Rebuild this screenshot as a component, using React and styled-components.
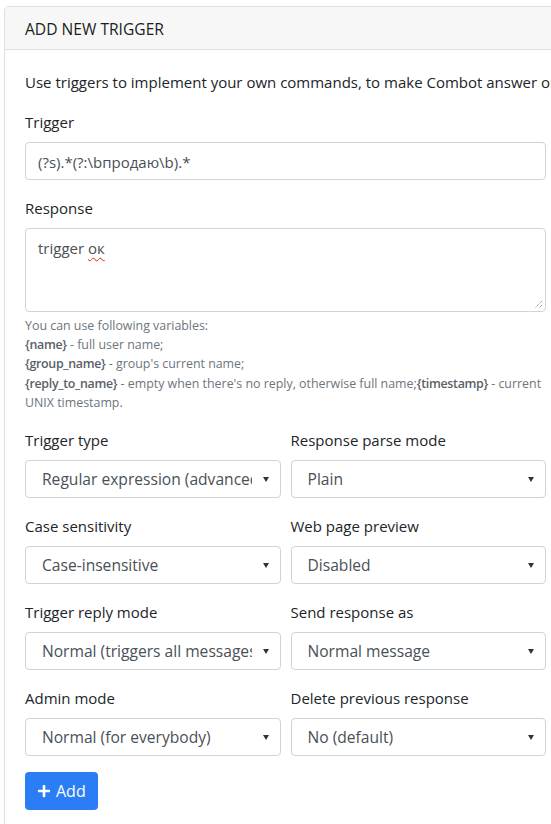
import React from 'react'
import styled, { createGlobalStyle } from 'styled-components'
import { FaPlus } from 'react-icons/fa'

const GlobalStyle = createGlobalStyle`
  html, body {
    margin: 0;
    padding: 0;
    background: #fff;
    overflow: hidden;
  }
  body {
    font-family: "Open Sans", "Noto Sans", sans-serif;
    font-size: 15px;
    line-height: 1.5;
    color: #212529;
  }
`

const Page = styled.div`
  padding: 6px 0 0 4px;
`

const Card = styled.div`
  width: 561px;
  border: 1px solid #dfdfdf;
  border-radius: 4px 0 0 0;
  background: #fff;
`

const CardHeader = styled.div`
  height: 43px;
  box-sizing: border-box;
  padding: 3px 20px 0;
  display: flex;
  align-items: center;
  background: #f7f7f7;
  border-bottom: 1px solid #dfdfdf;
  font-size: 15.6px;
  font-weight: 500;
  color: #1b1e21;
`

const CardBody = styled.div`
  padding: 20px;
`

const Intro = styled.p`
  margin: 0 0 16px;
  line-height: 24px;
  white-space: nowrap;
`

const FormGroup = styled.div`
  margin-bottom: 16px;
  min-width: 0;
`

const Label = styled.div`
  line-height: 24px;
  margin-bottom: 8px;
`

const Field = styled.div`
  position: relative;
  box-sizing: border-box;
  height: ${p => p.$tall ? '84px' : '38px'};
  border: 1px solid #ced4da;
  border-radius: 4px;
  padding: ${p => p.$tall ? '7px 12px' : '1px 12px 0'};
  display: flex;
  align-items: ${p => p.$tall ? 'flex-start' : 'center'};
  color: #495057;
  line-height: 24px;
`

const Misspelled = styled.span`
  text-decoration: underline wavy #e0201b;
  text-decoration-thickness: 1px;
  text-underline-offset: 3px;
`

const Grip = styled.svg`
  position: absolute;
  right: 2px;
  bottom: 2px;
`

const Help = styled.div`
  margin-top: 4px;
  margin-bottom: 16px;
  font-size: 12.4px;
  line-height: 19.2px;
  color: #6c757d;
  b {
    font-weight: 600;
    letter-spacing: -0.3px;
    color: #5a6168;
  }
`

const Row = styled.div`
  display: grid;
  grid-template-columns: minmax(0, 1fr) minmax(0, 1fr);
  column-gap: 10px;
`

const Select = styled.div`
  box-sizing: border-box;
  height: 38px;
  border: 1px solid #ced4da;
  border-radius: 4px;
  padding: 2px 9px 0 16px;
  display: flex;
  align-items: center;
  color: #495057;
  font-size: 15.6px;
`

const SelectText = styled.span`
  flex: 1;
  overflow: hidden;
  white-space: nowrap;
  margin-right: 11px;
`

const Caret = styled.span`
  width: 0;
  height: 0;
  border-left: 3px solid transparent;
  border-right: 3px solid transparent;
  border-top: 5px solid #333;
  margin: 0 2px 2px 0;
`

const Button = styled.button`
  display: inline-flex;
  align-items: center;
  gap: 5px;
  height: 38px;
  padding: 0 12px;
  border: none;
  border-radius: 4px;
  background: #2b7df5;
  color: #fff;
  font-family: inherit;
  font-size: 16px;
`

const selects = [
  ['Trigger type', 'Regular expression (advanced)', 'Response parse mode', 'Plain'],
  ['Case sensitivity', 'Case-insensitive', 'Web page preview', 'Disabled'],
  ['Trigger reply mode', 'Normal (triggers all messages)', 'Send response as', 'Normal message'],
  ['Admin mode', 'Normal (for everybody)', 'Delete previous response', 'No (default)'],
]

const SelectGroup = ({ label, value }) => (
  <FormGroup>
    <Label>{label}</Label>
    <Select>
      <SelectText>{value}</SelectText>
      <Caret />
    </Select>
  </FormGroup>
)

export default function App() {
  return (
    <Page>
      <GlobalStyle />
      <Card>
        <CardHeader>ADD NEW TRIGGER</CardHeader>
        <CardBody>
          <Intro>Use triggers to implement your own commands, to make Combot answer on certain messages.</Intro>
          <FormGroup>
            <Label>Trigger</Label>
            <Field>(?s).*(?:\bпродаю\b).*</Field>
          </FormGroup>
          <Label>Response</Label>
          <Field $tall>
            <span>trigger <Misspelled>ок</Misspelled></span>
            <Grip width="10" height="10" viewBox="0 0 10 10">
              <path d="M9 2 L2 9 M9 6 L6 9" stroke="#777" strokeWidth="1" strokeDasharray="1 1" />
            </Grip>
          </Field>
          <Help>
            You can use following variables:<br />
            <b>{'{name}'}</b> - full user name;<br />
            <b>{'{group_name}'}</b> - group's current name;<br />
            <b>{'{reply_to_name}'}</b> - empty when there's no reply, otherwise full name;<b>{'{timestamp}'}</b> - current UNIX timestamp.
          </Help>
          {selects.map(([l1, v1, l2, v2]) => (
            <Row key={l1}>
              <SelectGroup label={l1} value={v1} />
              <SelectGroup label={l2} value={v2} />
            </Row>
          ))}
          <Button><FaPlus size={14} />Add</Button>
        </CardBody>
      </Card>
    </Page>
  )
}
